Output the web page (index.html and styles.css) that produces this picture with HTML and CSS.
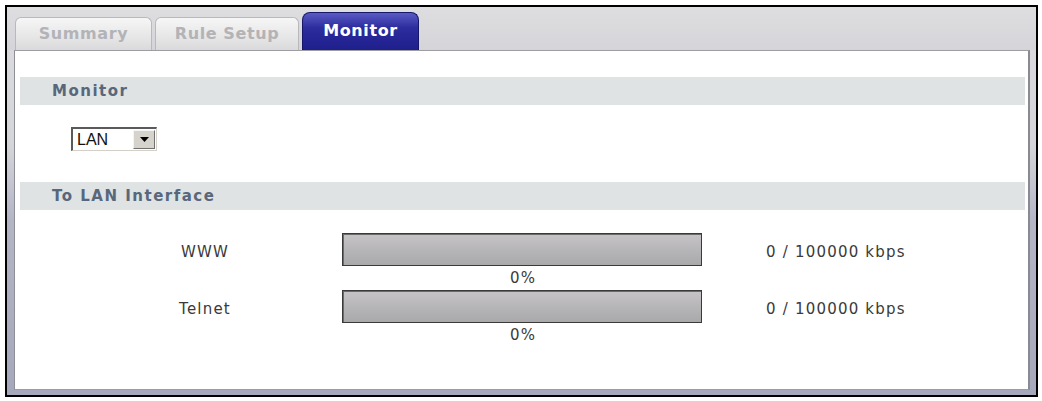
FILE: index.html
```html
<!DOCTYPE html>
<html>
<head>
<meta charset="utf-8">
<link rel="stylesheet" href="styles.css">
</head>
<body>
<div class="frame">
  <div class="tabbar">
    <div class="tab tab-summary">Summary</div>
    <div class="tab tab-rule">Rule Setup</div>
    <div class="tab tab-active">Monitor</div>
  </div>
  <div class="panel">
    <div class="section-bar">Monitor</div>
    <div class="select">
      <span class="select-value">LAN</span>
      <span class="select-btn"><svg width="9" height="5" viewBox="0 0 9 5"><polygon points="0,0 9,0 4.5,5" fill="#000"/></svg></span>
    </div>
    <div class="section-bar section-bar-lan">To LAN Interface</div>
    <div class="rows">
      <div class="label">WWW</div>
      <div class="meter">
        <div class="bar"></div>
        <div class="pct">0%</div>
      </div>
      <div class="rate">0 / 100000 kbps</div>

      <div class="label">Telnet</div>
      <div class="meter">
        <div class="bar"></div>
        <div class="pct">0%</div>
      </div>
      <div class="rate">0 / 100000 kbps</div>
    </div>
  </div>
</div>
</body>
</html>
```

FILE: styles.css
```css
html, body {
  margin: 0;
  padding: 0;
  background: #ffffff;
}

body {
  font-family: "DejaVu Sans", Verdana, sans-serif;
  font-size: 15px;
  color: #3a3a3a;
}

.frame {
  box-sizing: border-box;
  margin: 5px 0 0 5px;
  width: 1033px;
  height: 392px;
  border: 2px solid #000000;
  background: linear-gradient(#dcdbde 0%, #d6d6da 35%, #b4b6c6 55%, #a6a8bb 100%);
  display: flex;
  flex-direction: column;
}

.tabbar {
  height: 43px;
  flex: none;
  display: flex;
  align-items: flex-end;
  gap: 3px;
  padding-left: 8px;
  background: linear-gradient(#dedde0, #d5d4d8);
}

.tab {
  box-sizing: border-box;
  display: flex;
  align-items: center;
  justify-content: center;
  font-weight: bold;
  font-size: 16px;
  letter-spacing: 0.6px;
  border-radius: 6px 6px 0 0;
}

.tab-summary,
.tab-rule {
  height: 33px;
  padding-bottom: 2px;
  color: #b3b3b7;
  border: 1px solid #b9b9bc;
  border-bottom: none;
  background: linear-gradient(#f6f6f6, #e6e6e7 60%, #dadadc);
}

.tab-summary { width: 137px; }
.tab-rule { width: 144px; }

.tab-active {
  width: 117px;
  height: 38px;
  padding-bottom: 2px;
  color: #ffffff;
  border: 1px solid #16166a;
  border-bottom: none;
  border-radius: 8px 8px 0 0;
  background: linear-gradient(#5a5ac4, #2c2c9e 40%, #1e1e8c);
}

.panel {
  flex: 1;
  margin: 0 6px 5px 7px;
  padding: 26px 3px 0 5px;
  background: #ffffff;
  border-top: 1px solid #9e9ea2;
  border-left: 1px solid #8e8e96;
  border-right: 2px solid #8a8a92;
  border-bottom: 1px solid #9a9cae;
}

.section-bar {
  height: 28px;
  line-height: 28px;
  padding-left: 32px;
  background: #dfe3e4;
  color: #58677b;
  font-weight: bold;
  font-size: 15px;
  letter-spacing: 1.5px;
}

.section-bar-lan {
  margin-top: 31px;
}

.select {
  box-sizing: border-box;
  margin: 22px 0 0 51px;
  width: 86px;
  height: 24px;
  display: flex;
  align-items: stretch;
  border-top: 2px solid #5a5a5a;
  border-left: 2px solid #5a5a5a;
  border-right: 1px solid #d4d0c8;
  border-bottom: 1px solid #d4d0c8;
  background: #ffffff;
}

.select-value {
  flex: 1;
  padding-left: 4px;
  font-family: "Liberation Sans", Arial, sans-serif;
  font-size: 16px;
  line-height: 21px;
  color: #111111;
}

.select-btn {
  width: 20px;
  margin: 1px;
  display: flex;
  align-items: center;
  justify-content: center;
  background: #d6d3cc;
  border-top: 1px solid #f4f4f4;
  border-left: 1px solid #f4f4f4;
  border-right: 1px solid #707070;
  border-bottom: 1px solid #707070;
}

.rows {
  margin: 23px 0 0 110px;
  display: grid;
  grid-template-columns: 150px 360px 1fr;
  column-gap: 62px;
  letter-spacing: 1.2px;
}

.label,
.rate {
  height: 33px;
  line-height: 33px;
  padding-top: 3px;
  box-sizing: border-box;
}

.label {
  text-align: center;
}

.rate {
  margin-left: 2px;
}

.bar {
  box-sizing: border-box;
  height: 33px;
  border: 1px solid #3a3a3a;
  box-shadow: inset 1px 1px 0 #6a6a6a;
  background: linear-gradient(#c6c4c7, #b6b5b8 50%, #a9a9aa);
}

.pct {
  height: 24px;
  line-height: 24px;
  text-align: center;
  padding-left: 2px;
}
```
